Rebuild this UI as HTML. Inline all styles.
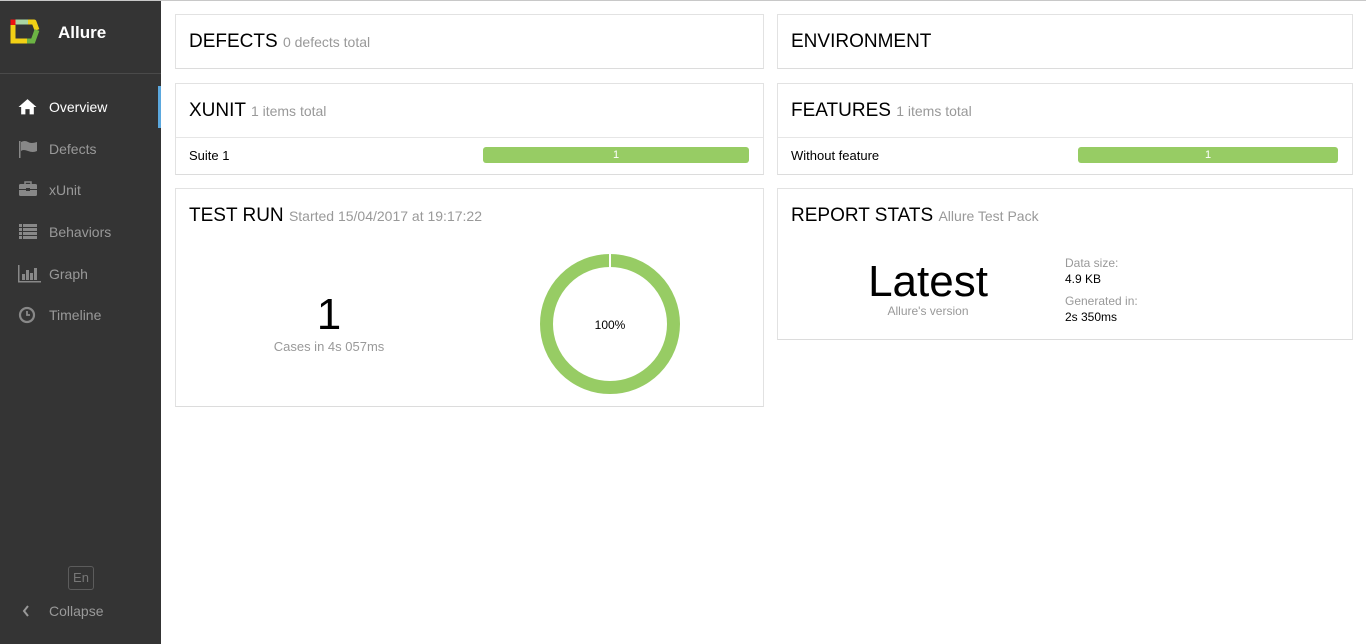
<!DOCTYPE html>
<html><head><meta charset="utf-8"><style>
*{box-sizing:border-box;margin:0;padding:0}
body{width:1366px;height:644px;overflow:hidden;font-family:"Liberation Sans",Arial,sans-serif;background:#fff;position:relative}
.topl{position:absolute;left:0;top:0;width:1366px;height:1px;background:#c8c8c8;z-index:5}
.side{position:absolute;left:0;top:0;width:161px;height:644px;background:#343434}
.logo{position:absolute;left:9px;top:17px}
.brand{position:absolute;left:58px;top:23px;color:#fff;font-weight:bold;font-size:17px}
.sep{position:absolute;left:0;top:73px;width:161px;height:1px;background:#4a4a4a}
.nav{position:absolute;left:0;width:161px;height:42px;color:#999;font-size:14px}
.nav span{position:absolute;left:49px;top:13px}
.nav svg{position:absolute;left:18px;top:12px}
.nav.act{color:#fff}
.nav.act:after{content:"";position:absolute;right:0;top:0;width:3px;height:42px;background:#5ba8de}
.en{position:absolute;left:68px;top:566px;width:26px;height:24px;border:1px solid #5c5c5c;border-radius:3px;color:#777;font-size:13px;text-align:center;line-height:22px}
.col{position:absolute;left:49px;top:603px;color:#999;font-size:14px}
.card{position:absolute;border:1px solid #e2e2e2;border-bottom-color:#dcdcdc;background:#fff}
.h{position:absolute;left:13px;font-size:19px;color:#000}
.h small{font-size:14px;color:#999}
.row{position:absolute;left:0;right:0;top:53px;border-top:1px solid #e6e6e6;height:38px;font-size:13px}
.row span{position:absolute;left:13px;top:10px}
.bar{position:absolute;top:9px;height:16px;background:#97cc64;border-radius:3px;color:#fff;font-size:11px;text-align:center;line-height:16px}
</style></head><body>
<div class="topl"></div>
<div class="side">
<svg class="logo" width="32" height="28" viewBox="0 0 32 28">
<path d="M4 5 H20" stroke="#a9d4a3" stroke-width="5" fill="none"/>
<path d="M4 2.5 V8" stroke="#e11" stroke-width="5"/>
<path d="M4 8 V24 H19" stroke="#f2d015" stroke-width="5" fill="none"/>
<path d="M19 5 L25 5 L28 13" stroke="#f2d015" stroke-width="5" fill="none" stroke-linejoin="round"/>
<path d="M28 13 L24 24 L18 24" stroke="#6cb444" stroke-width="5" fill="none"/>
</svg>
<div class="brand">Allure</div>
<div class="sep"></div>
<div class="nav act" style="top:86px"><svg width="19" height="17" viewBox="0 0 18 16"><path d="M9 1 L0.5 8.5 H3 V15.5 H7 V10.5 H11 V15.5 H15 V8.5 H17.5 Z" fill="#fff"/></svg><span>Overview</span></div>
<div class="nav" style="top:128px"><svg width="20" height="18" viewBox="0 0 20 18"><rect x="1" y="1" width="1.5" height="17" fill="#888"/><path d="M3 2 Q7 0 10 2 T19 2 V11 Q15 13 10 11 T3 11 Z" fill="#888"/></svg><span>Defects</span></div>
<div class="nav" style="top:169px"><svg width="20" height="16" viewBox="0 0 20 16"><path d="M7 3 V1 H13 V3" stroke="#888" stroke-width="1.5" fill="none"/><rect x="1" y="3" width="18" height="12" rx="1.5" fill="#888"/><rect x="1" y="8" width="18" height="1" fill="#343434"/><rect x="8" y="7" width="4" height="3" fill="#343434"/></svg><span>xUnit</span></div>
<div class="nav" style="top:211px"><svg width="20" height="16" viewBox="0 0 20 16"><g fill="#888"><rect x="1" y="1" width="3" height="3"/><rect x="5" y="1" width="14" height="3"/><rect x="1" y="5" width="3" height="3"/><rect x="5" y="5" width="14" height="3"/><rect x="1" y="9" width="3" height="3"/><rect x="5" y="9" width="14" height="3"/><rect x="1" y="13" width="3" height="3"/><rect x="5" y="13" width="14" height="3"/></g></svg><span>Behaviors</span></div>
<div class="nav" style="top:253px"><svg width="24" height="18" viewBox="0 0 24 18"><g fill="#888"><rect x="0" y="0" width="1.5" height="17"/><rect x="0" y="16" width="23" height="1.5"/><rect x="4" y="9" width="3" height="6"/><rect x="8" y="5" width="3" height="10"/><rect x="12" y="8" width="3" height="7"/><rect x="16" y="3" width="3" height="12"/></g></svg><span>Graph</span></div>
<div class="nav" style="top:294px"><svg width="18" height="18" viewBox="0 0 18 18"><circle cx="9" cy="9" r="7" stroke="#888" stroke-width="2.2" fill="none"/><path d="M9 5 V9 H12" stroke="#888" stroke-width="1.8" fill="none"/></svg><span>Timeline</span></div>
<div class="en">En</div>
<svg style="position:absolute;left:22px;top:605px" width="8" height="12" viewBox="0 0 8 12"><path d="M6 1 L2 6 L6 11" stroke="#999" stroke-width="2" fill="none"/></svg>
<div class="col">Collapse</div>
</div>

<div class="card" style="left:175px;top:14px;width:589px;height:55px"><div class="h" style="top:16px">DEFECTS <small>0 defects total</small></div></div>
<div class="card" style="left:777px;top:14px;width:576px;height:55px"><div class="h" style="top:16px">ENVIRONMENT</div></div>

<div class="card" style="left:175px;top:83px;width:589px;height:92px"><div class="h" style="top:16px">XUNIT <small>1 items total</small></div>
<div class="row"><span>Suite 1</span><div class="bar" style="left:307px;width:266px">1</div></div></div>
<div class="card" style="left:777px;top:83px;width:576px;height:92px"><div class="h" style="top:16px">FEATURES <small>1 items total</small></div>
<div class="row"><span>Without feature</span><div class="bar" style="left:300px;width:260px">1</div></div></div>

<div class="card" style="left:175px;top:188px;width:589px;height:219px"><div class="h" style="top:16px">TEST RUN <small>Started 15/04/2017 at 19:17:22</small></div>
<div style="position:absolute;left:0;width:306px;top:103px;text-align:center;font-size:44px;line-height:46px">1</div>
<div style="position:absolute;left:0;width:306px;top:150px;text-align:center;font-size:13px;color:#999">Cases in 4s 057ms</div>
<svg style="position:absolute;left:363px;top:64px" width="142" height="142" viewBox="0 0 142 142"><circle cx="71" cy="71" r="63.5" stroke="#97cc64" stroke-width="13" fill="none"/><rect x="70" y="0" width="2" height="15" fill="#fff"/><text x="71" y="76" text-anchor="middle" font-size="12" font-family="Liberation Sans,Arial" fill="#000">100%</text></svg>
</div>

<div class="card" style="left:777px;top:188px;width:576px;height:152px"><div class="h" style="top:16px">REPORT STATS <small>Allure Test Pack</small></div>
<div style="position:absolute;left:60px;width:180px;top:69px;text-align:center;font-size:44px;line-height:48px">Latest</div>
<div style="position:absolute;left:60px;width:180px;top:115px;text-align:center;font-size:12px;color:#999">Allure's version</div>
<div style="position:absolute;left:287px;top:66px;font-size:12px;line-height:16px"><div style="color:#999">Data size:</div><div>4.9 KB</div><div style="color:#999;margin-top:6px">Generated in:</div><div>2s 350ms</div></div>
</div>
</body></html>
